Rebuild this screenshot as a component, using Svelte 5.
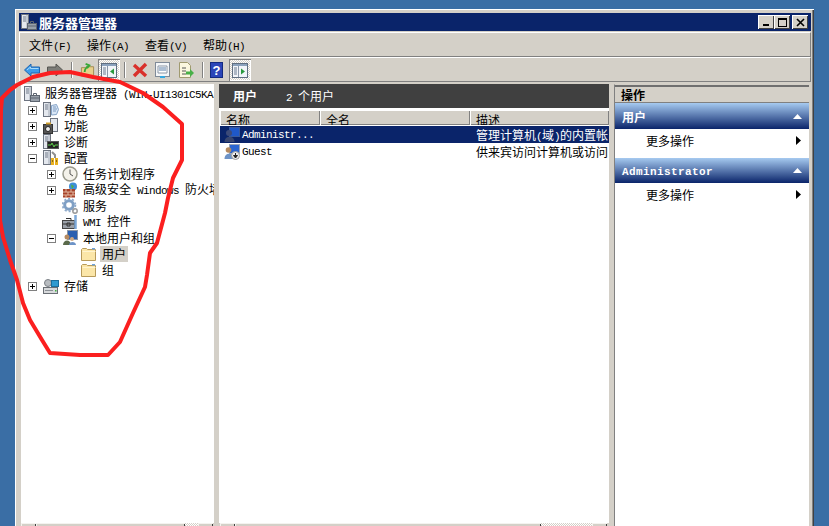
<script>
    const menus = [['文件', 'F'], ['操作', 'A'], ['查看', 'V'], ['帮助', 'H']];

    const tree = [
        { label: '服务器管理器 (WIN-UI1301C5KA', icon: 'server', level: -1 },
        { label: '角色', icon: 'roles', level: 0, box: '+' },
        { label: '功能', icon: 'features', level: 0, box: '+' },
        { label: '诊断', icon: 'diag', level: 0, box: '+' },
        { label: '配置', icon: 'config', level: 0, box: '-' },
        { label: '任务计划程序', icon: 'clock', level: 1, box: '+' },
        { label: '高级安全 Windows 防火墙', icon: 'firewall', level: 1, box: '+' },
        { label: '服务', icon: 'gear', level: 1 },
        { label: 'WMI 控件', icon: 'wmi', level: 1 },
        { label: '本地用户和组', icon: 'users', level: 1, box: '-' },
        { label: '用户', icon: 'folder', level: 2, selected: true },
        { label: '组', icon: 'folder', level: 2 },
        { label: '存储', icon: 'storage', level: 0, box: '+' }
    ];

    const columns = [
        { label: '名称', width: 100 },
        { label: '全名', width: 150 },
        { label: '描述', width: 139 }
    ];

    const users = [
        { name: 'Administr...', desc: '管理计算机(域)的内置帐户', icon: 'admin', selected: true },
        { name: 'Guest', desc: '供来宾访问计算机或访问域', icon: 'guest' }
    ];

    const actions = [
        { title: '用户', latin: false },
        { title: 'Administrator', latin: true }
    ];

    // SimSun's latin is half width, so latin runs get a 6px advance
    function parts(text) {
        return text.match(/[\x20-\x7e]+|[^\x20-\x7e]+/g).map((t) => ({
            text: t,
            en: /^[\x20-\x7e]/.test(t)
        }));
    }

    function indent(level) {
        return level < 0 ? 3 : level * 19 + 7;
    }
</script>

{#snippet txt(text)}
    {#each parts(text) as p}<span class:en={p.en}>{p.text}</span>{/each}
{/snippet}

{#snippet tower()}
    <rect x="0.500" y="0.500" width="7" height="14" fill="#e4e8ee" stroke="#6d7480" />
    <path d="M6 1v13" stroke="#a4acb8" />
    <path d="M2 3h3M2 5h3M2 7h3" stroke="#6f7888" />
{/snippet}

{#snippet icon(name)}
    <svg class="ico" viewBox="0 0 16 16" width="16" height="16">
        {#if name === 'server'}
            {@render tower()}
            <rect x="6.500" y="9.500" width="9" height="6" fill="#98a0aa" stroke="#5d6570" />
            <path d="M9.500 9.500v-2h3v2M6.500 12h9" fill="none" stroke="#5d6570" />
        {:else if name === 'roles'}
            {@render tower()}
            <path d="M8.500 3.500l5-1 2 5-2 5-5 .5z" fill="#d8e6f6" stroke="#86a4c8" />
            <path d="M10 5h3M10 7h4M10 9h3" stroke="#7d9ac0" />
        {:else if name === 'features'}
            <rect x="7.500" y="0.500" width="7" height="13" fill="#e4e8ee" stroke="#6d7480" />
            <rect x="0.500" y="6.500" width="9" height="9" fill="#555" stroke="#333" />
            <circle cx="5" cy="11" r="2.500" fill="#eee" stroke="#222" />
            <path d="M3 5.500h5" stroke="#d0a030" stroke-width="2" />
        {:else if name === 'diag'}
            {@render tower()}
            <rect x="4.500" y="7.500" width="11" height="7" fill="#222" stroke="#555" />
            <path d="M5 11h3l1-2 2 4 1-2h3" fill="none" stroke="#5fce4a" />
        {:else if name === 'config'}
            {@render tower()}
            <path d="M9 2l3 3v3" fill="none" stroke="#909090" stroke-width="2" />
            <path d="M9.500 8v7M13.500 8v7" stroke="#e8b020" stroke-width="3" />
            <path d="M9.500 10v2M13.500 10v2" stroke="#8a6a10" />
        {:else if name === 'clock'}
            <circle cx="8" cy="8" r="7" fill="#f4f2ea" stroke="#9a9a8c" stroke-width="1.500" />
            <path d="M8 3.500v4.500l3 2" fill="none" stroke="#555" />
        {:else if name === 'firewall'}
            <circle cx="11" cy="4.500" r="4" fill="#3e8ed8" />
            <path d="M9 2.500l3 1.500-2 3z" fill="#50b040" />
            <rect x="1" y="7" width="12" height="8.500" fill="#a8432a" />
            <path d="M1 10h12M1 13h12M4 7v3M9 7v3M6 10v3M11 10v3M4 13v3M9 13v3" stroke="#e0b8a0" />
        {:else if name === 'gear'}
            <circle cx="7" cy="7" r="4.300" fill="none" stroke="#7f9fc4" stroke-width="3" />
            <circle cx="7" cy="7" r="6.300" fill="none" stroke="#8fabcc" stroke-width="2" stroke-dasharray="2 2" />
            <circle cx="13" cy="13" r="2.200" fill="none" stroke="#9a9a9a" stroke-width="1.500" />
        {:else if name === 'wmi'}
            <rect x="0.500" y="6.500" width="12" height="8" fill="#9aa0a8" stroke="#444" />
            <path d="M0.500 10h12M4 4.500h5v2M5 9h3v3H5z" fill="none" stroke="#333" />
            <path d="M13.500 1v3M13.500 4v11" stroke="#7ca8d8" stroke-width="2.500" />
        {:else if name === 'users'}
            <rect x="5.500" y="0.500" width="10" height="9" fill="#2a5fb0" stroke="#8a96a8" />
            <circle cx="5" cy="7" r="2.500" fill="#b58a60" />
            <path d="M1 15c0-6 8-6 8 0z" fill="#5a6a4a" />
            <circle cx="10" cy="9" r="2" fill="#d0a880" />
            <path d="M7 15c0-4 7-4 7 0z" fill="#6d93c7" />
        {:else if name === 'folder'}
            <path d="M0.500 14.500v-11l1-1h4l1 1h8v11z" fill="#fbe6a8" stroke="#b79a5a" />
            <path d="M11 2h3v1.500h-3z" fill="#6fa3d8" />
            <path d="M1.500 5.500h13" stroke="#fff4cf" />
        {:else if name === 'storage'}
            <circle cx="5" cy="5" r="3.500" fill="#b8bcc0" stroke="#7a7f85" />
            <rect x="8.500" y="2.500" width="7" height="6" fill="#2f9ad0" stroke="#1b6e9c" />
            <rect x="0.500" y="9.500" width="14" height="6" fill="#d8dadc" stroke="#6a6f75" />
            <path d="M2 12.500h8" stroke="#8a8f95" />
            <rect x="12" y="12" width="1.500" height="1.500" fill="#40b040" />
        {:else if name === 'admin'}
            <rect x="5.500" y="0.500" width="10" height="9" fill="#1f58c8" stroke="#3a5a9a" />
            <circle cx="5" cy="6" r="3" fill="#3c4a78" />
            <path d="M0.500 15c0-7 10-7 10 0z" fill="#38466f" />
        {:else if name === 'guest'}
            <rect x="5.500" y="0.500" width="10" height="9" fill="#2a65d0" stroke="#98a4b8" />
            <circle cx="4.500" cy="6" r="2.800" fill="#b58a60" />
            <path d="M0.500 15c0-7 9-7 9 0z" fill="#6d93c7" />
            <circle cx="11.500" cy="11.500" r="4" fill="#eee" stroke="#999" />
            <path d="M11.500 9v3.500M9.500 11.500l2 2.500 2-2.500z" stroke="#222" fill="#222" />
        {/if}
    </svg>
{/snippet}

{#snippet toggled(arrow)}
    <span class="tool toggled">
        <svg viewBox="0 0 18 18" width="18" height="18">
            <rect x="1.500" y="2.500" width="15" height="14" fill="#f2f5f9" stroke="#5f6e80" />
            <path d="M2 3h14v2H2z" fill="#8ba2bd" />
            <path d="M3 7h3M3 9h3M3 11h3M3 13h3" stroke="#6a7a90" />
            <path d="M7.500 5v11" stroke="#8a97a8" />
            {#if arrow === 'left'}
                <path d="M14 7.500v6l-4-3z" fill="#2b9a3d" />
            {:else}
                <path d="M10 7.500v6l4-3z" fill="#2b9a3d" />
            {/if}
        </svg>
    </span>
{/snippet}

<div class="window">
    <div class="titlebar">
        <span class="title-icon">{@render icon('server')}</span>
        <span class="title-text">服务器管理器</span>
        <div class="caption-btns">
            <button class="cap"><span class="min"></span></button>
            <button class="cap"><span class="max"></span></button>
            <button class="cap close">
                <svg viewBox="0 0 9 9" width="9" height="9"><path d="M1 1l7 7M8 1l-7 7" stroke="#000" stroke-width="1.600" /></svg>
            </button>
        </div>
    </div>

    <div class="menubar">
        {#each menus as [name, key]}
            <span class="menu">{name}<span class="en">({key})</span></span>
        {/each}
    </div>

    <div class="toolbar">
        <svg class="nav" viewBox="0 0 16 14" width="16" height="14">
            <path d="M0.500 7L7 1v3h8.500v6H7v3z" fill="#3d9be8" stroke="#1f64b0" />
            <path d="M3 7l3.500-3v1.500h8" fill="none" stroke="#a8dafa" />
        </svg>
        <svg class="nav next" viewBox="0 0 16 14" width="16" height="14">
            <path d="M15.500 7L9 1v3H0.500v6H9v3z" fill="#7d7d78" stroke="#555550" />
        </svg>
        <span class="sep first"></span>
        <svg class="up" viewBox="0 0 16 16" width="15" height="16">
            <path d="M1.500 14.500V5.500h4l1-1h8v10z" fill="#e8d08a" stroke="#a08a50" />
            <path d="M5 10c0-3 2-5 4-6M6 1.500L10 3 7.500 6" fill="none" stroke="#38a838" stroke-width="2" />
        </svg>
        {@render toggled('left')}
        <span class="sep second"></span>
        <svg class="del" viewBox="0 0 16 16" width="16" height="16">
            <path d="M2 3l12 11M14 2L2 14" stroke="#d9302a" stroke-width="3.400" />
        </svg>
        <svg class="props" viewBox="0 0 15 16" width="15" height="16">
            <rect x="0.500" y="0.500" width="14" height="14" fill="#f4f6f8" stroke="#7f8a98" />
            <path d="M3 4h9v7H3z" fill="#fff" stroke="#8a96a6" />
            <path d="M4 6h7M4 8h7" stroke="#5a7fa8" />
            <path d="M5 15h5" stroke="#35a8e0" stroke-width="2" />
        </svg>
        <svg class="export" viewBox="0 0 16 16" width="16" height="16">
            <path d="M1.500 0.500h8l3 3v12h-11z" fill="#fbf7df" stroke="#a09a70" />
            <path d="M4 6h4M4 9h4M4 12h4" stroke="#555" />
            <path d="M8 9.500h4V7l4 4-4 4v-2.500H8z" fill="#48b048" />
        </svg>
        <span class="sep help-sep"></span>
        <svg class="help" viewBox="0 0 13 16" width="13" height="16">
            <rect x="0.500" y="0.500" width="12" height="15" fill="#2b45b8" stroke="#142a80" />
            <text x="6.500" y="12.500" text-anchor="middle" font-family="Liberation Sans" font-weight="700" font-size="13" fill="#fff">?</text>
        </svg>
        {@render toggled('right')}
    </div>

    <div class="panes">
        <div class="pane tree">
            <div class="tree-list">
                {#each tree as row}
                    <div class="row" style="padding-left: {indent(row.level)}px">
                        {#if row.level >= 0}
                            <span class="box">
                                {#if row.box}
                                    <svg viewBox="0 0 9 9" width="9" height="9">
                                        <rect x="0.500" y="0.500" width="8" height="8" fill="#fff" stroke="#808080" />
                                        <path d={row.box === '+' ? 'M2 4.500h5M4.500 2v5' : 'M2 4.500h5'} stroke="#000" />
                                    </svg>
                                {/if}
                            </span>
                        {/if}
                        {@render icon(row.icon)}
                        <span class="label" class:selected={row.selected}>{@render txt(row.label)}</span>
                    </div>
                {/each}
            </div>
            <div class="scroll left-scroll">
                <span class="sb-btn"></span><span class="thumb"></span><span class="track"></span><span class="sb-btn"></span>
            </div>
        </div>

        <div class="pane center">
            <div class="head">
                <b>用户</b>
                <span class="count">{@render txt('2 个用户')}</span>
            </div>
            <div class="list">
                <div class="cols">
                    {#each columns as col}
                        <span class="col" style="width: {col.width}px">{col.label}</span>
                    {/each}
                </div>
                {#each users as user}
                    <div class="user" class:active={user.selected}>
                        <span class="cell name">{@render icon(user.icon)}<span class="en">{user.name}</span></span>
                        <span class="cell full"></span>
                        <span class="cell desc"><span class="desc-text">{@render txt(user.desc)}</span></span>
                    </div>
                {/each}
            </div>
            <div class="scroll center-scroll">
                <span class="sb-btn"></span><span class="thumb"></span><span class="track"></span><span class="sb-btn"></span>
            </div>
        </div>

        <div class="pane actions">
            <div class="act-title">操作</div>
            {#each actions as a, i}
                <div class="act-head" class:second={i > 0}>
                    <span class:latin={a.latin}>{a.title}</span>
                    <svg viewBox="0 0 9 5" width="9" height="5"><path d="M0 5l4.500-5L9 5z" fill="#fff" /></svg>
                </div>
                <div class="act-row" class:second={i > 0}>
                    <span>更多操作</span>
                    <svg viewBox="0 0 5 9" width="5" height="9"><path d="M0 0l5 4.500L0 9z" fill="#000" /></svg>
                </div>
            {/each}
        </div>
    </div>

    <!-- red marker ring drawn over the screenshot -->
    <svg class="scribble" viewBox="0 0 829 526" width="829" height="526">
        <path
            d="M2 98 L10 90 L17 85 L33 77 L50 73 L70 72 L93 77 L120 82 L143 93 L163 107 L182 124 L182 138 L182 160 L173 178 L170 190 L168 198 L165 213 L157 243 L150 253 L147 275 L145 287 L133 313 L120 342 L108 355 L80 355 L50 353 L42 340 L30 320 L23 303 L17 280 L10 260 L3 237 L0 220 L0 180 L1 110 Z"
            fill="none"
            stroke="#fb1f1f"
            stroke-width="4"
            stroke-linejoin="round"
        />
    </svg>
</div>

<style>
    :global(body) {
        margin: 0;
        background: #3a6ea5;
        height: 526px;
        overflow: hidden;
    }

    .window {
        margin: 9px 0 0 15px;
        width: 799px;
        height: 531px;
        box-sizing: border-box;
        padding: 4px 3px 0 4px;
        background: #d4d0c8;
        box-shadow: inset 1px 1px 0 #fff, inset -1px 0 0 #404040, inset -2px 0 0 #808080;
        display: flex;
        flex-direction: column;
        font-family: "Noto Sans CJK SC", "Liberation Sans", sans-serif;
        font-size: 12px;
        color: #000;
    }

    .en {
        font-family: "Liberation Mono", monospace;
        font-size: 11px;
        letter-spacing: -0.6px;
    }

    .titlebar {
        height: 18px;
        flex: none;
        display: flex;
        align-items: center;
        background: #0a246a;
        color: #fff;
        padding: 0 3px 0 2px;
    }

    .title-text {
        margin-left: 2px;
        font-size: 13px;
        font-weight: 700;
    }

    .title-icon {
        display: flex;
    }

    .caption-btns {
        margin-left: auto;
        display: flex;
    }

    .cap {
        width: 16px;
        height: 14px;
        padding: 0;
        border: 0;
        background: #d4d0c8;
        box-shadow: inset 1px 1px 0 #fff, inset -1px -1px 0 #404040;
        display: flex;
        align-items: center;
        justify-content: center;
    }

    .close {
        margin-left: 2px;
    }

    .min {
        width: 6px;
        height: 2px;
        background: #000;
        margin-top: 6px;
    }

    .max {
        width: 7px;
        height: 6px;
        border: 1px solid #000;
        border-top-width: 2px;
    }

    .menubar,
    .toolbar {
        flex: none;
        box-sizing: border-box;
        height: 25px;
        display: flex;
        align-items: center;
        border: 1px solid #808080;
        border-left-color: #fff;
        border-top-color: #fff;
    }

    .menubar {
        margin-top: 1px;
        padding-left: 9px;
    }

    .menu {
        width: 58px;
        white-space: nowrap;
    }

    .toolbar {
        padding-left: 4px;
    }

    .next {
        margin-left: 7px;
    }

    .sep {
        width: 1px;
        height: 16px;
        background: #808080;
        box-shadow: 1px 0 0 #fff;
    }

    .sep.first {
        margin: 0 8px;
    }

    .sep.second {
        margin: 0 7px 0 4px;
    }

    .sep.help-sep {
        margin: 0 7px 0 8px;
    }

    .tool {
        width: 22px;
        height: 22px;
        box-sizing: border-box;
        display: flex;
        align-items: center;
        justify-content: center;
        background: repeating-conic-gradient(#fff 0 25%, #d4d0c8 0 50%) 0 0 / 2px 2px;
        box-shadow: inset 1px 1px 0 #808080, inset -1px -1px 0 #fff;
    }

    .up {
        margin-right: 3px;
    }

    .del {
        margin-right: 7px;
    }

    .props {
        margin-right: 8px;
    }

    .help {
        margin-right: 6px;
    }

    .panes {
        flex: 1;
        min-height: 0;
        display: grid;
        grid-template-columns: 193px 390px 195px;
        column-gap: 5px;
        padding: 2px 0 0 2px;
    }

    .pane {
        background: #fff;
        display: flex;
        flex-direction: column;
        min-width: 0;
        overflow: hidden;
    }

    .tree-list {
        flex: 1;
        padding-top: 2px;
        min-height: 0;
    }

    .row {
        height: 16px;
        display: flex;
        align-items: center;
        white-space: nowrap;
    }

    .box {
        flex: none;
        width: 9px;
        height: 9px;
        margin-right: 6px;
        display: flex;
    }

    .ico {
        flex: none;
    }

    .label {
        margin-left: 5px;
        line-height: 16px;
    }

    .label.selected {
        margin-left: 3px;
        padding: 0 2px;
        background: #d4d0c8;
    }

    .scroll {
        flex: none;
        height: 17px;
        display: flex;
        background: #d4d0c8;
    }

    .left-scroll .thumb {
        width: 149px;
    }

    .left-scroll .track {
        width: 13px;
    }

    .center-scroll {
        padding-left: 1px;
    }

    .center-scroll .thumb {
        width: 306px;
    }

    .center-scroll .track {
        width: 51px;
    }

    .sb-btn,
    .thumb {
        flex: none;
        box-sizing: border-box;
        background: #d4d0c8;
        box-shadow: inset 1px 1px 0 #f4f3ef, inset -1px 0 0 #404040;
    }

    .sb-btn {
        width: 15px;
    }

    .track {
        flex: none;
        background: repeating-conic-gradient(#fff 0 25%, #d4d0c8 0 50%) 0 0 / 2px 2px;
    }

    .head {
        flex: none;
        box-sizing: border-box;
        height: 24px;
        background: #404040;
        color: #fff;
        display: flex;
        align-items: center;
        padding: 0 0 1px 14px;
    }

    .head b {
        width: 53px;
    }

    .list {
        flex: 1;
        padding: 2px 0 0 1px;
        min-height: 0;
    }

    .cols {
        height: 15px;
        display: flex;
        overflow: hidden;
        background: #d4d0c8;
    }

    .col {
        flex: none;
        box-sizing: border-box;
        padding: 2px 0 0 6px;
        line-height: 16px;
        box-shadow: inset 1px 1px 0 #fff, inset -1px -1px 0 #808080;
    }

    .user {
        display: flex;
        height: 17px;
        align-items: center;
        margin-top: 1px;
        margin-bottom: -1px;
        white-space: nowrap;
        overflow: hidden;
    }

    .user.active {
        background: #0a246a;
        color: #fff;
    }

    .cell {
        flex: none;
        display: flex;
        align-items: center;
        overflow: hidden;
    }

    .name {
        width: 100px;
        gap: 2px;
        padding-left: 4px;
        box-sizing: border-box;
    }

    .full {
        width: 150px;
    }

    .desc {
        width: 138px;
        padding-left: 6px;
        box-sizing: border-box;
    }

    .desc-text {
        white-space: nowrap;
    }

    .actions {
        border-left: 1px solid #808080;
        border-top: 1px solid #d4d0c8;
    }

    .act-title {
        flex: none;
        box-sizing: border-box;
        height: 18px;
        padding-left: 6px;
        line-height: 15px;
        font-weight: 700;
        background: #d4d0c8;
        border-top: 2px solid #6f6f6f;
        border-bottom: 1px solid #808080;
    }

    .act-head {
        flex: none;
        height: 26px;
        display: flex;
        align-items: center;
        justify-content: space-between;
        padding: 0 7px;
        color: #fff;
        font-weight: 700;
        background: linear-gradient(#a6caf0, #0a246a);
    }

    .act-head.second {
        height: 25px;
    }

    .latin {
        font-family: "Liberation Mono", monospace;
        font-size: 11px;
        letter-spacing: 0.4px;
        padding-top: 2px;
    }

    .act-row {
        flex: none;
        height: 29px;
        box-sizing: border-box;
        display: flex;
        align-items: flex-start;
        justify-content: space-between;
        padding: 4px 8px 0 31px;
        line-height: 16px;
    }

    .act-row svg {
        margin-top: 3px;
    }

    .act-row.second {
        height: 25px;
    }

    .scribble {
        position: absolute;
        left: 0;
        top: 0;
        pointer-events: none;
    }
</style>
